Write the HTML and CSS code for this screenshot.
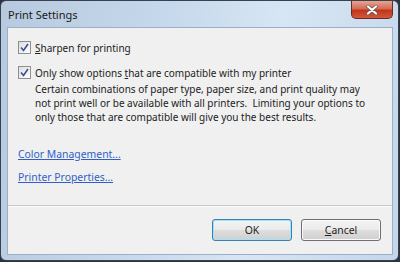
FILE: index.html
```html
<!DOCTYPE html>
<html>
  <head>
    <title>Print Settings</title>
    <link rel="stylesheet" href="styles.css">
  </head>
  <body>
    <div class="window">
      <div class="titlebar">
        <span class="title">Print Settings</span>
        <div class="close">
          <svg width="14" height="10" viewBox="0 0 14 10">
            <path d="M3 1.5 L11 8.5 M11 1.5 L3 8.5" stroke="#555" stroke-width="3.4" stroke-linecap="round"/>
            <path d="M3 1.5 L11 8.5 M11 1.5 L3 8.5" stroke="#fff" stroke-width="2.2" stroke-linecap="round"/>
          </svg>
        </div>
      </div>

      <div class="client">
        <div class="content">
          <div class="option">
            <span class="check">
              <svg width="9" height="9" viewBox="0 0 9 9"><path d="M1 4.5 L3.5 7.5 L8 1" fill="none" stroke="#3c4f96" stroke-width="1.6"/></svg>
            </span>
            <span><u>S</u>harpen for printing</span>
          </div>

          <div class="option second">
            <span class="check">
              <svg width="9" height="9" viewBox="0 0 9 9"><path d="M1 4.5 L3.5 7.5 L8 1" fill="none" stroke="#3c4f96" stroke-width="1.6"/></svg>
            </span>
            <div>
              <div>Only show options <u>t</u>hat are compatible with my printer</div>
              <p class="desc">Certain combinations of paper type, paper size, and print quality may<br>not print well or be available with all printers.&nbsp; Limiting your options to<br>only those that are compatible will give you the best results.</p>
            </div>
          </div>

          <div class="links">
            <a href="#">Color Management...</a>
            <a href="#">Printer Properties...</a>
          </div>
        </div>

        <div class="commands">
          <button class="btn default">OK</button>
          <button class="btn"><u>C</u>ancel</button>
        </div>
      </div>
    </div>
  </body>
</html>
```
FILE: styles.css
```css
body {
  margin: 0;
  padding: 0;
  background-color: #2b3340;
  font-family: "Noto Sans", "Open Sans", sans-serif;
  font-size: 10px;
  color: #222;
}

.window {
  width: 386px;
  height: 254px;
  border: 1px solid #38414e;
  border-radius: 6px;
  background: linear-gradient(100deg, #b6c9de 0%, #c7d9ec 40%, #d7e6f5 65%, #c3d6ea 100%);
  padding: 0 5px 5px 6px;
  display: flex;
  flex-direction: column;
}

.titlebar {
  height: 26px;
  flex-shrink: 0;
  display: flex;
  justify-content: space-between;
  align-items: flex-start;
}

.title {
  margin-top: 6px;
  margin-left: 1px;
  font-size: 11px;
  color: #1a1a1a;
}

.close {
  width: 42px;
  height: 18px;
  border: 1px solid #6b2b23;
  border-top: none;
  border-radius: 0 0 5px 5px;
  background: linear-gradient(#e8a493 0%, #d46b53 45%, #c0351c 55%, #d2593d 100%);
  display: flex;
  align-items: center;
  justify-content: center;
  box-sizing: border-box;
}

.client {
  flex: 1;
  border: 1px solid #9cafc4;
  background-color: #f0f0f0;
  display: flex;
  flex-direction: column;
}

.content {
  flex: 1;
  padding: 13px 10px 0 10px;
  border-bottom: 1px solid #c9c9c9;
  box-shadow: 0 1px 0 #fbfbfb;
}

.option {
  display: flex;
  align-items: flex-start;
  gap: 4px;
  line-height: 14px;
}

.option.second {
  margin-top: 11px;
}

.check {
  width: 13px;
  height: 13px;
  flex-shrink: 0;
  border: 1px solid #8f8f8f;
  box-sizing: border-box;
  background: linear-gradient(135deg, #dcdcdc, #ffffff);
  display: flex;
  align-items: center;
  justify-content: center;
}

.desc {
  margin: 2px 0 0 0;
  white-space: nowrap;
}

.links {
  margin-top: 23px;
  display: flex;
  flex-direction: column;
  gap: 9px;
  line-height: 14px;
  font-size: 10.4px;
}

.links a {
  color: #2f5fc6;
  text-decoration: underline;
  align-self: flex-start;
}

.commands {
  height: 48px;
  flex-shrink: 0;
  display: flex;
  justify-content: flex-end;
  align-items: center;
  gap: 9px;
  padding-right: 11px;
}

.btn {
  width: 80px;
  height: 22px;
  font-family: inherit;
  font-size: 10.4px;
  color: #1e1e1e;
  border: 1px solid #707070;
  border-radius: 3px;
  background: linear-gradient(#f3f3f3 0%, #ebebeb 48%, #dddddd 52%, #d0d0d0 100%);
  box-shadow: inset 0 0 0 1px #fafafa;
  padding: 0;
}

.btn.default {
  border-color: #3c7fb1;
  box-shadow: inset 0 0 0 1px #9ee3f7;
}
```
